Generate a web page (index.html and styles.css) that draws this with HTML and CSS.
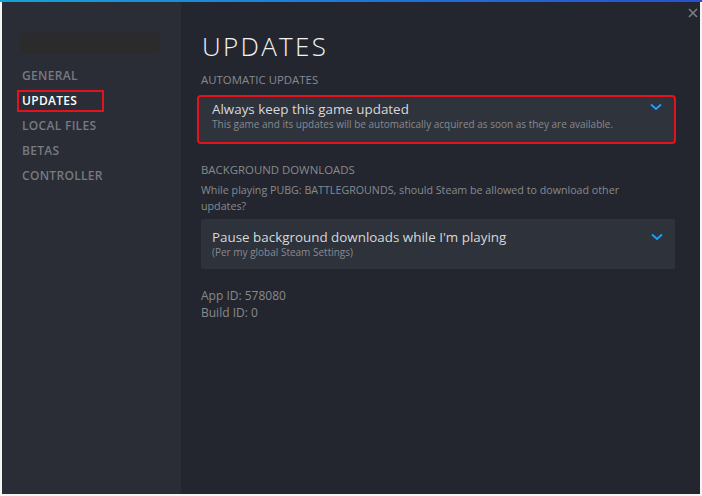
FILE: index.html
```html
<!DOCTYPE html>
<html lang="en">
<head>
  <meta charset="UTF-8">
  <title>Properties - Updates</title>
  <link rel="stylesheet" href="styles.css">
</head>
<body>
  <div id="frame">
    <div id="sidebar">
      <div class="gamename"></div>
      <nav class="nav">
        <a class="nav-item">GENERAL</a>
        <a class="nav-item active">UPDATES</a>
        <a class="nav-item">LOCAL FILES</a>
        <a class="nav-item">BETAS</a>
        <a class="nav-item">CONTROLLER</a>
      </nav>
    </div>
    <div id="main">
      <button class="close" title="Close">
        <svg width="10" height="10" viewBox="0 0 10 10"><path d="M1 1 L9 9 M9 1 L1 9" stroke="#7c7f86" stroke-width="1.6" fill="none"/></svg>
      </button>
      <h1>UPDATES</h1>
      <div class="label">AUTOMATIC UPDATES</div>
      <div class="dropdown marked">
        <div class="dd-text">
          <div class="dd-title">Always keep this game updated</div>
          <div class="dd-sub">This game and its updates will be automatically acquired as soon as they are available.</div>
        </div>
        <svg class="chev" width="12" height="8" viewBox="0 0 12 8"><path d="M1 1.5 L6 6 L11 1.5" stroke="#1a9fff" stroke-width="2" fill="none"/></svg>
      </div>
      <div class="label second">BACKGROUND DOWNLOADS</div>
      <p class="desc">While playing PUBG: BATTLEGROUNDS, should Steam be allowed to download other updates?</p>
      <div class="dropdown tall">
        <div class="dd-text">
          <div class="dd-title">Pause background downloads while I'm playing</div>
          <div class="dd-sub">(Per my global Steam Settings)</div>
        </div>
        <svg class="chev" width="12" height="8" viewBox="0 0 12 8"><path d="M1 1.5 L6 6 L11 1.5" stroke="#1a9fff" stroke-width="2" fill="none"/></svg>
      </div>
      <div class="ids">
        <div>App ID: 578080</div>
        <div>Build ID: 0</div>
      </div>
    </div>
  </div>
</body>
</html>
```
FILE: styles.css
```css
html, body {margin:0;padding:0;background:#fff;}

body {font-family: "Open Sans", "Noto Sans", sans-serif;}

#frame {
  display:flex;
  height:496px;
  box-sizing:border-box;
  border-left:2px solid #f4f4f4;
  border-right:2px solid #f4f4f4;
  border-bottom:2px solid #f4f4f4;
  border-top:2px solid #1aa0e0;
  position:relative;
}

#frame:before {
  content:"";
  position:absolute;
  left:-2px;right:-2px;top:-2px;height:2px;
  background:linear-gradient(to right, #16a3d6, #1f6fd8 60%, #2a4fd0);
}

#sidebar {
  width:179px;
  background:#2a2d35;
  padding-top:31px;
  box-sizing:border-box;
}

.gamename {
  margin-left:18px;
  width:140px;height:20px;
  background:#2b2b2c;
  filter:blur(1px);
}

.nav {margin-top:12px;display:flex;flex-direction:column;align-items:flex-start;}

.nav-item {
  display:block;
  margin-left:15px;
  padding-left:3px;
  width:87px;height:22px;
  box-sizing:border-box;
  border:2px solid transparent;
  margin-bottom:3px;
  font-size:12px;line-height:18px;
  font-weight:600;
  letter-spacing:0.3px;
  color:#767a81;
  cursor:pointer;
}

.nav-item.active {color:#fff;border-color:#e3121c;}

#main {
  flex:1;
  background:#23262e;
  padding:27px 25px 0 20px;
  position:relative;
}

.close {
  position:absolute;
  top:4px;right:1px;
  background:none;border:0;padding:0;
  width:12px;height:12px;
  cursor:pointer;
}

h1 {
  margin:0;
  font-size:26px;line-height:34px;
  font-weight:300;
  letter-spacing:2.3px;
  color:#f2f2f2;
  padding-left:1px;
}

.label {
  margin-top:10px;
  font-size:11.4px;line-height:14px;
  color:#878a90;
}

.label.second {margin-top:21px;}

.dropdown {
  display:flex;
  justify-content:space-between;
  align-items:flex-start;
  background:#2e323a;
  border-radius:2px;
  padding:9px 12px 11px 11px;
  color:#d6d8db;
}

.dropdown.marked {
  margin-top:10px;
  outline:2px solid #e3121c;
  margin-left:-2px;margin-right:1px;
  padding:3px 12px 11px 13px;
  background:#2f333b;
}

.dd-title {font-size:13.4px;line-height:18px;}

.dd-sub {font-size:10px;line-height:13px;color:#878a90;}

.tall .dd-sub {line-height:12px;}

.chev {margin-top:5px;}

.marked .chev {margin-top:3px;}

.desc {
  margin:5px 0 5px;
  max-width:440px;
  font-size:10.7px;line-height:16px;
  color:#878a90;
}

.ids {
  margin-top:18px;
  font-size:12px;line-height:17px;
  color:#878a90;
}
```
